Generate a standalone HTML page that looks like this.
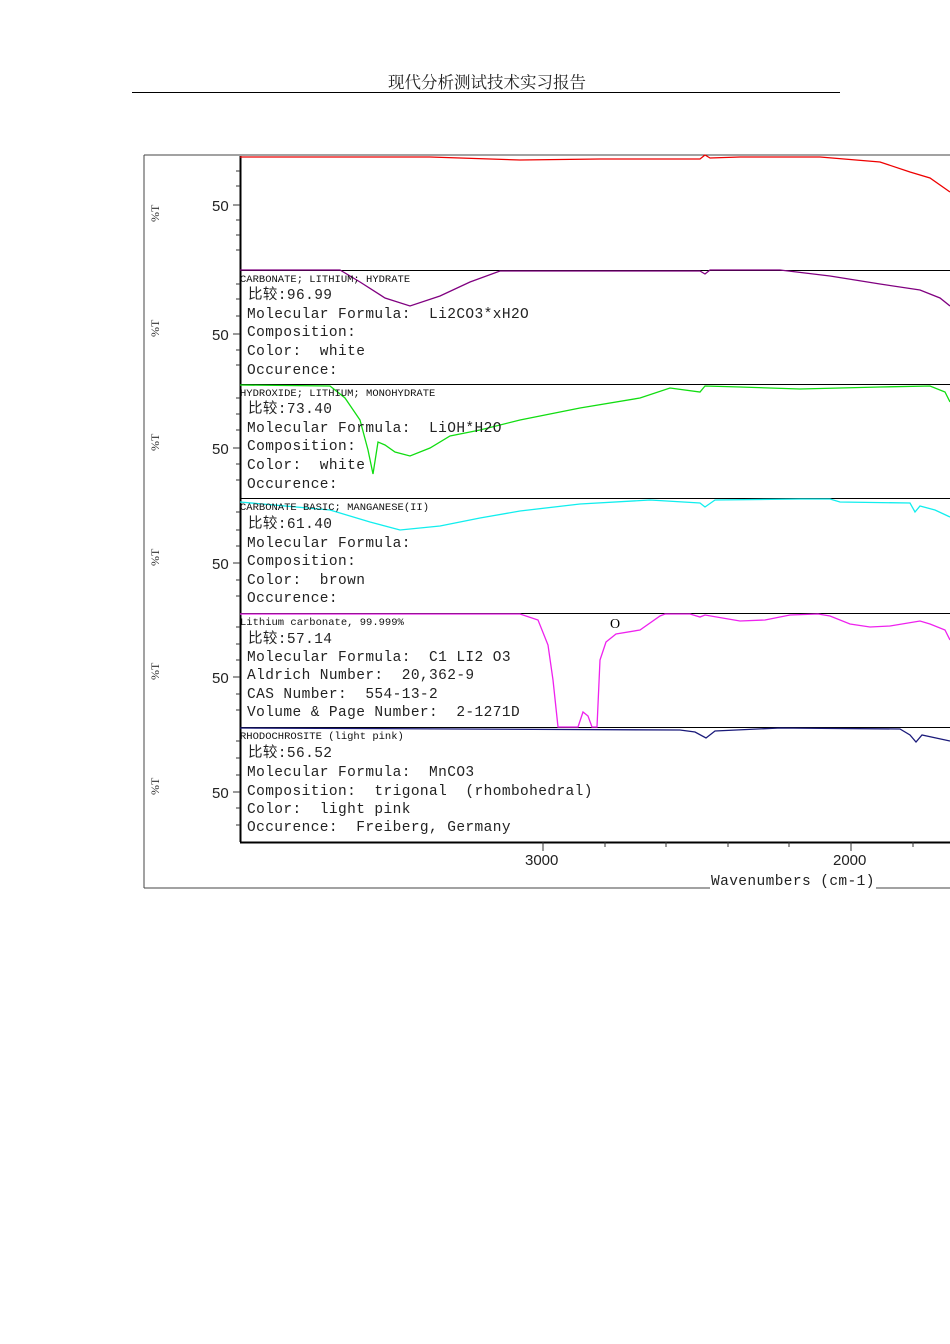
<!DOCTYPE html>
<html><head><meta charset="utf-8"><style>
body{margin:0;background:#fff;width:950px;height:1344px;overflow:hidden;position:relative;font-family:"Liberation Serif","Noto Serif CJK SC",serif}
.hdr{position:absolute;left:0;width:974px;top:69px;text-align:center;font-size:16.5px;color:#222}
.hl{position:absolute;left:132px;top:92px;width:708px;height:1px;background:#000}
svg{position:absolute;left:0;top:0}
text{font-family:"Liberation Mono","Noto Sans CJK SC",monospace;white-space:pre}
.t{font-family:"Liberation Mono","Noto Serif CJK SC",monospace;font-size:10.5px;fill:#111}
.b{font-size:14.5px;fill:#222;letter-spacing:0.4px}
.n{font-family:"Liberation Sans",sans-serif;font-size:15px;fill:#222}
</style></head><body>
<div class="hdr">现代分析测试技术实习报告</div>
<div class="hl"></div>
<svg width="950" height="1344" xml:space="preserve">
<g stroke="#444" fill="none" stroke-width="1">
<path d="M144 155V888M144 155H950M144 888H710M876 888H950"/>
</g>
<g stroke="#000" fill="none">
<path d="M240.5 156V842" stroke-width="2"/>
<path d="M240 842.5H950" stroke-width="2"/>
<path d="M240 270.5H950M240 384.5H950M240 498.5H950M240 613.5H950M240 727.5H950"/>
</g>
<g stroke="#333" stroke-width="1">
<path d="M233 205H240M233 334H240M233 448H240M233 563H240M233 677H240M233 792H240"/>
<path d="M236 171H240M236 186H240M236 220H240M236 235H240M236 250H240M236 284H240M236 299H240M236 316H240M236 350H240M236 365H240M236 398H240M236 414H240M236 430H240M236 464H240M236 480H240M236 512H240M236 530H240M236 546H240M236 580H240M236 596H240M236 627H240M236 644H240M236 660H240M236 694H240M236 710H240M236 741H240M236 758H240M236 775H240M236 808H240M236 825H240"/>
<path d="M543 842V851M851 842V851M605 842V847M666 842V847M728 842V847M789 842V847M913 842V847"/>
</g>
<g class="n"><text x="212" y="211" class="n">50</text><text x="212" y="340" class="n">50</text><text x="212" y="454" class="n">50</text><text x="212" y="569" class="n">50</text><text x="212" y="683" class="n">50</text><text x="212" y="798" class="n">50</text>
<text x="525" y="865" class="n">3000</text><text x="833" y="865" class="n">2000</text></g>
<g font-size="11" fill="#333">
<text transform="translate(159,222) rotate(-90)" style="font-family:'Liberation Serif',serif;font-size:12px">%T</text>
<text transform="translate(159,337) rotate(-90)" style="font-family:'Liberation Serif',serif;font-size:12px">%T</text>
<text transform="translate(159,451) rotate(-90)" style="font-family:'Liberation Serif',serif;font-size:12px">%T</text>
<text transform="translate(159,566) rotate(-90)" style="font-family:'Liberation Serif',serif;font-size:12px">%T</text>
<text transform="translate(159,680) rotate(-90)" style="font-family:'Liberation Serif',serif;font-size:12px">%T</text>
<text transform="translate(159,795) rotate(-90)" style="font-family:'Liberation Serif',serif;font-size:12px">%T</text>
</g>
<text x="711" y="885" class="b">Wavenumbers (cm-1)</text>
<g fill="none" stroke-width="1.3">
<polyline stroke="#e00" points="240,157 430,157 520,160 600,159 700,159 705,155 710,158 740,157 820,157 880,162 910,172 930,178 950,192"/>
<polyline stroke="#800080" points="240,270 340,270 360,282 385,298 410,306 440,296 470,282 500,271 700,271 705,274 710,270 780,270 830,276 880,284 920,290 940,298 950,306"/>
<polyline stroke="#1d1" points="240,385 330,386 345,398 360,420 368,450 373,474 378,442 385,445 395,452 410,456 430,448 450,436 480,430 520,420 580,408 640,398 670,388 700,392 705,386 740,387 800,389 880,387 930,386 945,392 950,402"/>
<polyline stroke="#1ee" points="240,502 330,510 370,522 400,530 440,526 480,518 520,511 580,504 650,500 700,503 705,507 715,500 800,499 830,499 840,502 910,503 915,512 920,506 935,510 950,517"/>
<polyline stroke="#e2e" points="240,614 520,614 538,620 548,645 553,680 558,727 578,727 583,712 588,716 592,727 597,727 600,660 606,642 616,634 640,630 660,616 665,614 690,614 700,617 705,615 740,621 765,620 790,615 818,614 830,616 850,624 870,627 890,626 920,621 930,624 945,630 950,640"/>
<polyline stroke="#1a1a7a" points="240,728 680,730 695,732 706,738 715,731 780,728 900,729 910,735 916,742 922,735 950,741"/>
</g>
<g class="t">
<text x="240" y="282">CARBONATE; LITHIUM; HYDRATE</text>
<text x="240" y="396">HYDROXIDE; LITHIUM; MONOHYDRATE</text>
<text x="240" y="510">CARBONATE BASIC; MANGANESE(II)</text>
<text x="240" y="625">Lithium carbonate, 99.999%</text>
<text x="240" y="739">RHODOCHROSITE (light pink)</text>
</g>
<g class="b">
<text x="248" y="299">比较:96.99</text><text x="247" y="318">Molecular Formula:  Li2CO3*xH2O</text><text x="247" y="336">Composition:</text><text x="247" y="355">Color:  white</text><text x="247" y="374">Occurence:</text>
<text x="248" y="413">比较:73.40</text><text x="247" y="432">Molecular Formula:  LiOH*H2O</text><text x="247" y="450">Composition:</text><text x="247" y="469">Color:  white</text><text x="247" y="488">Occurence:</text>
<text x="248" y="528">比较:61.40</text><text x="247" y="547">Molecular Formula:</text><text x="247" y="565">Composition:</text><text x="247" y="584">Color:  brown</text><text x="247" y="602">Occurence:</text>
<text x="248" y="643">比较:57.14</text><text x="247" y="661">Molecular Formula:  C1 LI2 O3</text><text x="247" y="679">Aldrich Number:  20,362-9</text><text x="247" y="698">CAS Number:  554-13-2</text><text x="247" y="716">Volume &amp; Page Number:  2-1271D</text>
<text x="248" y="757">比较:56.52</text><text x="247" y="776">Molecular Formula:  MnCO3</text><text x="247" y="795">Composition:  trigonal  (rhombohedral)</text><text x="247" y="813">Color:  light pink</text><text x="247" y="831">Occurence:  Freiberg, Germany</text>
</g>
<text x="610" y="628" style="font-family:'Liberation Serif',serif;font-size:14px" fill="#000">O</text>
</svg>
</body></html>
